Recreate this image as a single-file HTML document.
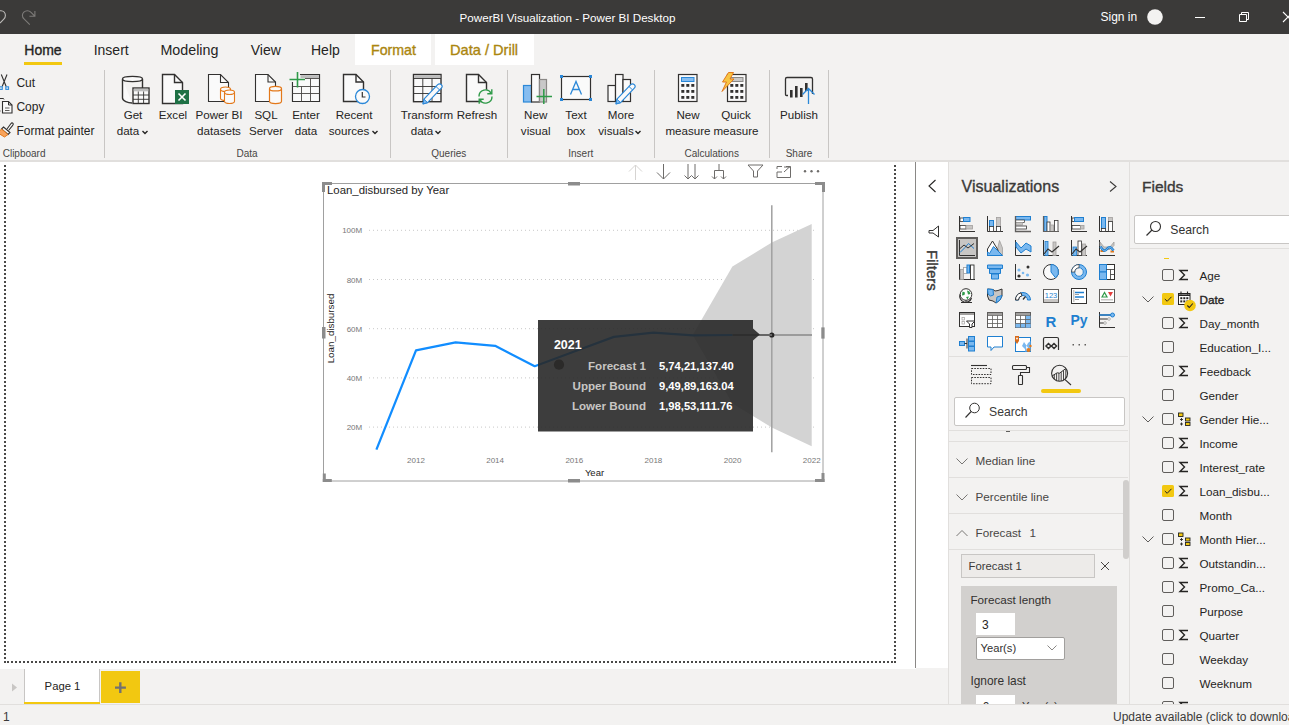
<!DOCTYPE html><html><head><meta charset="utf-8"><style>
html,body{margin:0;padding:0}
body{width:1289px;height:725px;position:relative;overflow:hidden;background:#f3f2f1;font-family:"Liberation Sans", sans-serif}
.t{position:absolute;white-space:nowrap;line-height:1}
.r{position:absolute}
.sb{-webkit-text-stroke:0.35px currentColor}
svg.r{overflow:visible}

</style></head><body>
<div class="r" style="left:0px;top:0px;width:1289px;height:34px;background:#3b3a39"></div>
<svg class="r" style="left:0px;top:0px;" width="40" height="34" viewBox="0 0 40 34"><path d="M-2 10.7 H1 A4.6 4.8 0 0 1 5.4 15.5 Q5.4 17.6 3.8 19.2 L0 23" fill="none" stroke="#bdbbb9" stroke-width="1.1"/><path d="M29.8 24.6 L24 18.9 Q22.4 17.4 22.4 15.5 A5 4.8 0 0 1 27.4 10.7 Q29.4 10.7 30.8 12.2 L34.3 15.7 M34.9 11 V16.3 H29.4" fill="none" stroke="#7d7b79" stroke-width="1.1"/></svg>
<div class="t" style="left:417.50px;width:300px;text-align:center;top:11.64px;font-size:11.65px;color:#ffffff;font-weight:normal;">PowerBI Visualization - Power BI Desktop</div>
<div class="t" style="left:1100.5px;top:11.34px;font-size:12px;color:#ffffff;font-weight:normal;">Sign in</div>
<svg class="r" style="left:1146px;top:9px;" width="18" height="18" viewBox="0 0 18 18"><circle cx="9" cy="8" r="7.8" fill="#f3f2f1"/></svg>
<div class="r" style="left:1195px;top:17px;width:10px;height:1px;background:#ffffff"></div>
<svg class="r" style="left:1237px;top:10px;" width="14" height="14" viewBox="0 0 14 14"><path d="M2.5 4.5 H9.5 V11.5 H2.5 Z M4.5 4.5 V2.5 H11.5 V9.5 H9.5" fill="none" stroke="#ffffff" stroke-width="1"/></svg>
<svg class="r" style="left:1283px;top:12px;" width="10" height="10" viewBox="0 0 10 10"><path d="M0 0 L10 10 M0 10 L10 0" fill="none" stroke="#ffffff" stroke-width="1.1"/></svg>
<div class="r" style="left:355px;top:34px;width:76px;height:31px;background:#ffffff"></div>
<div class="r" style="left:435px;top:34px;width:99px;height:31px;background:#ffffff"></div>
<div class="t sb" style="left:24.3px;top:43.15px;font-size:14px;color:#252423;font-weight:normal;">Home</div>
<div class="r" style="left:24px;top:62px;width:38px;height:3px;background:#f2c811"></div>
<div class="t" style="left:93.7px;top:43.15px;font-size:14px;color:#252423;font-weight:normal;">Insert</div>
<div class="t" style="left:160.4px;top:42.90px;font-size:14.3px;color:#252423;font-weight:normal;">Modeling</div>
<div class="t" style="left:250.7px;top:43.15px;font-size:14px;color:#252423;font-weight:normal;">View</div>
<div class="t" style="left:311px;top:43.15px;font-size:14px;color:#252423;font-weight:normal;">Help</div>
<div class="t sb" style="left:371px;top:42.98px;font-size:14.2px;color:#ab860f;font-weight:normal;">Format</div>
<div class="t sb" style="left:450px;top:42.64px;font-size:14.6px;color:#ab860f;font-weight:normal;">Data / Drill</div>
<div class="r" style="left:0px;top:160px;width:1289px;height:2px;background:#e1dfdd"></div>
<div class="r" style="left:104px;top:70px;width:1px;height:88px;background:#c8c6c4"></div>
<div class="r" style="left:390px;top:70px;width:1px;height:88px;background:#c8c6c4"></div>
<div class="r" style="left:507px;top:70px;width:1px;height:88px;background:#c8c6c4"></div>
<div class="r" style="left:654px;top:70px;width:1px;height:88px;background:#c8c6c4"></div>
<div class="r" style="left:769px;top:70px;width:1px;height:88px;background:#c8c6c4"></div>
<div class="r" style="left:828px;top:70px;width:1px;height:88px;background:#c8c6c4"></div>
<div class="t" style="left:2.7px;top:149.13px;font-size:10px;color:#484644;font-weight:normal;">Clipboard</div>
<div class="t" style="left:147.00px;width:200px;text-align:center;top:149.13px;font-size:10px;color:#484644;font-weight:normal;">Data</div>
<div class="t" style="left:348.80px;width:200px;text-align:center;top:149.13px;font-size:10px;color:#484644;font-weight:normal;">Queries</div>
<div class="t" style="left:480.80px;width:200px;text-align:center;top:149.13px;font-size:10px;color:#484644;font-weight:normal;">Insert</div>
<div class="t" style="left:611.70px;width:200px;text-align:center;top:149.13px;font-size:10px;color:#484644;font-weight:normal;">Calculations</div>
<div class="t" style="left:699.00px;width:200px;text-align:center;top:149.13px;font-size:10px;color:#484644;font-weight:normal;">Share</div>
<div class="t" style="left:16.4px;top:76.84px;font-size:12px;color:#252423;font-weight:normal;">Cut</div>
<div class="t" style="left:16.4px;top:100.64px;font-size:12px;color:#252423;font-weight:normal;">Copy</div>
<div class="t" style="left:16.4px;top:124.84px;font-size:12px;color:#252423;font-weight:normal;">Format painter</div>
<svg class="r" style="left:0px;top:70px;" width="20" height="70" viewBox="0 0 20 70"><path d="M1.3 4.5 L6.2 16.5 M7 4.5 L2.2 16.5" fill="none" stroke="#323130" stroke-width="1.1"/><rect x="-0.5" y="16.8" width="2.8" height="2.6" fill="#c7e0f4" stroke="#2b88d8" stroke-width="1"/><rect x="5.8" y="16.8" width="2.8" height="2.6" fill="#c7e0f4" stroke="#2b88d8" stroke-width="1"/><path d="M-1 28.5 H3.5 L4 29.5 M0.5 41 H-1" fill="none" stroke="#323130" stroke-width="1"/><path d="M2.5 31.5 H8.5 L12 35 V43 H2.5 Z" fill="#fafafa" stroke="#323130" stroke-width="1.1"/><path d="M8.5 31.5 V35 H12" fill="none" stroke="#323130" stroke-width="1"/><path d="M5 38 H9.5 M5 40.5 H9.5" stroke="#605e5c" stroke-width="1"/><path d="M7 59 L11 53.5 Q12 52.3 13 53.3 Q13.7 54.3 12.7 55.3 L8.5 60.5" fill="#fafafa" stroke="#323130" stroke-width="1.1"/><path d="M3.5 57 L10 62.5 L8 64.5 L1.5 59 Z" fill="#fafafa" stroke="#323130" stroke-width="1.1"/><path d="M1.5 59 L8 64.5 L4.5 67 L-2 63 Z" fill="#f7a35c" stroke="#e3791b" stroke-width="1"/></svg>
<div class="t" style="left:33.00px;width:200px;text-align:center;top:108.98px;font-size:11.6px;color:#252423;font-weight:normal;">Get</div>
<div class="t" style="left:28.00px;width:200px;text-align:center;top:125.48px;font-size:11.6px;color:#252423;font-weight:normal;">data</div>
<svg class="r" style="left:140.5px;top:129px;" width="8" height="6" viewBox="0 0 8 6"><path d="M1.5 2 L4 4.5 L6.5 2" fill="none" stroke="#252423" stroke-width="1.4"/></svg>
<div class="t" style="left:73.00px;width:200px;text-align:center;top:108.98px;font-size:11.6px;color:#252423;font-weight:normal;">Excel</div>
<div class="t" style="left:119.00px;width:200px;text-align:center;top:108.98px;font-size:11.6px;color:#252423;font-weight:normal;">Power BI</div>
<div class="t" style="left:119.00px;width:200px;text-align:center;top:125.48px;font-size:11.6px;color:#252423;font-weight:normal;">datasets</div>
<div class="t" style="left:166.00px;width:200px;text-align:center;top:108.98px;font-size:11.6px;color:#252423;font-weight:normal;">SQL</div>
<div class="t" style="left:166.00px;width:200px;text-align:center;top:125.48px;font-size:11.6px;color:#252423;font-weight:normal;">Server</div>
<div class="t" style="left:206.00px;width:200px;text-align:center;top:108.98px;font-size:11.6px;color:#252423;font-weight:normal;">Enter</div>
<div class="t" style="left:206.00px;width:200px;text-align:center;top:125.48px;font-size:11.6px;color:#252423;font-weight:normal;">data</div>
<div class="t" style="left:254.00px;width:200px;text-align:center;top:108.98px;font-size:11.6px;color:#252423;font-weight:normal;">Recent</div>
<div class="t" style="left:249.00px;width:200px;text-align:center;top:125.48px;font-size:11.6px;color:#252423;font-weight:normal;">sources</div>
<svg class="r" style="left:371px;top:129px;" width="8" height="6" viewBox="0 0 8 6"><path d="M1.5 2 L4 4.5 L6.5 2" fill="none" stroke="#252423" stroke-width="1.4"/></svg>
<div class="t" style="left:327.00px;width:200px;text-align:center;top:108.98px;font-size:11.6px;color:#252423;font-weight:normal;">Transform</div>
<div class="t" style="left:322.00px;width:200px;text-align:center;top:125.48px;font-size:11.6px;color:#252423;font-weight:normal;">data</div>
<svg class="r" style="left:434px;top:129px;" width="8" height="6" viewBox="0 0 8 6"><path d="M1.5 2 L4 4.5 L6.5 2" fill="none" stroke="#252423" stroke-width="1.4"/></svg>
<div class="t" style="left:377.00px;width:200px;text-align:center;top:108.98px;font-size:11.6px;color:#252423;font-weight:normal;">Refresh</div>
<div class="t" style="left:435.70px;width:200px;text-align:center;top:108.98px;font-size:11.6px;color:#252423;font-weight:normal;">New</div>
<div class="t" style="left:435.70px;width:200px;text-align:center;top:125.48px;font-size:11.6px;color:#252423;font-weight:normal;">visual</div>
<div class="t" style="left:476.00px;width:200px;text-align:center;top:108.98px;font-size:11.6px;color:#252423;font-weight:normal;">Text</div>
<div class="t" style="left:476.00px;width:200px;text-align:center;top:125.48px;font-size:11.6px;color:#252423;font-weight:normal;">box</div>
<div class="t" style="left:521.00px;width:200px;text-align:center;top:108.98px;font-size:11.6px;color:#252423;font-weight:normal;">More</div>
<div class="t" style="left:516.00px;width:200px;text-align:center;top:125.48px;font-size:11.6px;color:#252423;font-weight:normal;">visuals</div>
<svg class="r" style="left:634px;top:129px;" width="8" height="6" viewBox="0 0 8 6"><path d="M1.5 2 L4 4.5 L6.5 2" fill="none" stroke="#252423" stroke-width="1.4"/></svg>
<div class="t" style="left:588.00px;width:200px;text-align:center;top:108.98px;font-size:11.6px;color:#252423;font-weight:normal;">New</div>
<div class="t" style="left:588.00px;width:200px;text-align:center;top:125.48px;font-size:11.6px;color:#252423;font-weight:normal;">measure</div>
<div class="t" style="left:636.00px;width:200px;text-align:center;top:108.98px;font-size:11.6px;color:#252423;font-weight:normal;">Quick</div>
<div class="t" style="left:636.00px;width:200px;text-align:center;top:125.48px;font-size:11.6px;color:#252423;font-weight:normal;">measure</div>
<div class="t" style="left:699.00px;width:200px;text-align:center;top:108.98px;font-size:11.6px;color:#252423;font-weight:normal;">Publish</div>
<svg class="r" style="left:0;top:0" width="1289" height="162" viewBox="0 0 1289 162"><g stroke-width="1.4" fill="none">
<path d="M122.5 79 V98 C122.5 101 128 103 132 103 M122.5 79 C122.5 75.5 142.5 75.5 142.5 79 C142.5 82.5 122.5 82.5 122.5 79 M142.5 79 V88" stroke="#323130" fill="#fafafa"/>
<rect x="133" y="88" width="16" height="15.5" fill="#fafafa" stroke="#323130"/>
<rect x="133.7" y="88.7" width="14.6" height="2.6" fill="#bdbdbd" stroke="none"/>
<path d="M133 95 H149 M133 99.3 H149 M138.3 91.5 V103.5 M143.6 91.5 V103.5" stroke="#323130" stroke-width="0.9"/>
<path d="M162.5 74.5 H174.5 L182.5 82.5 V103.5 H162.5 Z" fill="#fafafa" stroke="#323130"/><path d="M174.5 74.5 V82.5 H182.5" stroke="#323130"/>
<rect x="175" y="90" width="14" height="14" fill="#1e7145" stroke="none"/>
<path d="M178.5 93.5 L185.5 100.5 M185.5 93.5 L178.5 100.5" stroke="#ffffff" stroke-width="1.6"/>
<path d="M208.5 74.5 H220.5 L228.5 82.5 V101.5 H208.5 Z" fill="#fafafa" stroke="#323130" stroke-width="1.1"/><path d="M220.5 74.5 V82.5 H228.5" stroke="#323130" stroke-width="1.1"/>
<path d="M220.5 89.2 C220.5 86.2 230.5 86.2 230.5 89.2 V98.3 C230.5 101.3 220.5 101.3 220.5 98.3 Z" fill="#fafafa" stroke="#e3791b" stroke-width="1.1"/><path d="M220.5 89.2 C220.5 92.2 230.5 92.2 230.5 89.2" fill="none" stroke="#e3791b" stroke-width="1.1"/>
<path d="M224.5 92.2 C224.5 89.2 234.5 89.2 234.5 92.2 V101.3 C234.5 104.3 224.5 104.3 224.5 101.3 Z" fill="#fafafa" stroke="#e3791b" stroke-width="1.1"/><path d="M224.5 92.2 C224.5 95.2 234.5 95.2 234.5 92.2" fill="none" stroke="#e3791b" stroke-width="1.1"/>
<path d="M255.5 74.5 H268 L275.5 82 V101.5 H255.5 Z" fill="#fafafa" stroke="#323130" stroke-width="1.1"/><path d="M268 74.5 V82 H275.5" stroke="#323130" stroke-width="1.1"/>
<path d="M269.5 88.7 C269.5 85.7 281.5 85.7 281.5 88.7 V101.3 C281.5 104.3 269.5 104.3 269.5 101.3 Z" fill="#fafafa" stroke="#e3791b" stroke-width="1.2"/><path d="M269.5 88.7 C269.5 91.7 281.5 91.7 281.5 88.7" fill="none" stroke="#e3791b" stroke-width="1.2"/>
<path d="M292.5 82 V101.5 H319.5 V74.5 H300" fill="#fafafa" stroke="#323130" stroke-width="1.1"/>
<rect x="292.5" y="82" width="27" height="19.5" fill="#fafafa" stroke="none"/><rect x="300" y="75" width="19" height="11" fill="#fafafa" stroke="none"/>
<path d="M292.5 82 V101.5 H319.5 V74.5 H300" fill="none" stroke="#323130" stroke-width="1.1"/>
<rect x="300.5" y="75.1" width="18.5" height="3" fill="#bdbdbd" stroke="none"/>
<path d="M305 78.5 H319.5 M292.5 86.5 H319.5 M292.5 93.5 H319.5 M301.5 86.5 V101.5 M310.5 78.5 V101.5" stroke="#484644" stroke-width="0.9"/>
<path d="M289.5 79.5 H305 M297.5 72 V87.5" stroke="#2e9a48" stroke-width="1.6"/>
<path d="M343.5 74.5 H356 L363.5 82 V101.5 H343.5 Z" fill="#fafafa" stroke="#323130"/><path d="M356 74.5 V82 H363.5" stroke="#323130"/>
<circle cx="362.5" cy="96.5" r="7" fill="#fafafa" stroke="#2b88d8" stroke-width="1.3"/><path d="M362.3 92 V97 H365.5" stroke="#323130" stroke-width="1.2"/>
<rect x="413.5" y="74.5" width="27.5" height="27.2" fill="#fafafa" stroke="#323130"/>
<rect x="414.2" y="75.2" width="26.1" height="3" fill="#bdbdbd" stroke="none"/>
<path d="M413.5 78.5 H441 M413.5 86.5 H441 M413.5 93.5 H441 M422.8 78.5 V101.7 M432 78.5 V101.7" stroke="#323130" stroke-width="0.9"/>
<g transform="translate(423 103.8)"><path d="M0 0 L0.95 -4.6 L14.7 -19.1 Q16.5 -20.9 18.3 -19.1 Q20.1 -17.3 18.3 -15.7 L4.55 -1.2 Z" fill="#fafafa" stroke="#2b88d8" stroke-width="1.2" stroke-linejoin="round"/><path d="M0 0 L0.95 -4.6 L4.55 -1.2 Z" fill="#86bdf0" stroke="#2b88d8" stroke-width="1"/><path d="M12.9 -17.4 L16.5 -13.9" stroke="#2b88d8" stroke-width="1"/></g>
<path d="M466.5 74.5 H478.5 L486.5 82.5 V101.5 H466.5 Z" fill="#fafafa" stroke="#323130"/><path d="M478.5 74.5 V82.5 H486.5" stroke="#323130"/>
<circle cx="485.5" cy="96.5" r="7" fill="#f3f2f1" stroke="none"/>
<path d="M479 96.5 A6.5 6.5 0 0 1 491.2 93.3 M492 96.5 A6.5 6.5 0 0 1 479.8 99.7" stroke="#2e9a48" stroke-width="1.4"/><path d="M491.8 89.3 V93.8 H487.3 M479.2 103.7 V99.2 H483.7" stroke="#2e9a48" stroke-width="1.4"/>
<rect x="523.5" y="85.5" width="8" height="16.5" fill="#86bdf0" stroke="#2b88d8" stroke-width="1.2"/>
<rect x="531.5" y="74.5" width="8" height="27.5" fill="#fafafa" stroke="#323130" stroke-width="1.2"/>
<rect x="539.5" y="79.5" width="7" height="22.5" fill="#c8c8c8" stroke="#8a8886" stroke-width="1.2"/>
<path d="M536.5 96.5 H552 M543.8 89 V104" stroke="#2e9a48" stroke-width="1.5"/>
<rect x="561.5" y="76.5" width="29" height="23" fill="#fafafa" stroke="#323130" stroke-width="1.2"/>
<rect x="560.0" y="75.0" width="3" height="3" fill="#2b88d8" stroke="none"/>
<rect x="589.0" y="75.0" width="3" height="3" fill="#2b88d8" stroke="none"/>
<rect x="560.0" y="98.0" width="3" height="3" fill="#2b88d8" stroke="none"/>
<rect x="589.0" y="98.0" width="3" height="3" fill="#2b88d8" stroke="none"/>
<path d="M570.5 94.5 L576 81.5 L581.5 94.5 M572.5 89.5 H579.5" stroke="#2b88d8" stroke-width="1.3"/>
<rect x="608" y="85.5" width="7.5" height="16" fill="#fafafa" stroke="#323130" stroke-width="1.2"/>
<rect x="615.5" y="74.5" width="7.5" height="27" fill="#fafafa" stroke="#323130" stroke-width="1.2"/>
<rect x="623" y="79.5" width="7.5" height="22" fill="#fafafa" stroke="#323130" stroke-width="1.2"/>
<g transform="translate(616 103.8)"><path d="M0 0 L0.95 -4.6 L14.7 -19.1 Q16.5 -20.9 18.3 -19.1 Q20.1 -17.3 18.3 -15.7 L4.55 -1.2 Z" fill="#fafafa" stroke="#2b88d8" stroke-width="1.2" stroke-linejoin="round"/><path d="M0 0 L0.95 -4.6 L4.55 -1.2 Z" fill="#86bdf0" stroke="#2b88d8" stroke-width="1"/><path d="M12.9 -17.4 L16.5 -13.9" stroke="#2b88d8" stroke-width="1"/></g>
<rect x="678.5" y="74.5" width="18.5" height="27" fill="#fafafa" stroke="#323130" stroke-width="1.2"/>
<rect x="681.5" y="77.5" width="12.5" height="4" fill="#86bdf0" stroke="#2b88d8" stroke-width="1"/>
<rect x="681.3" y="84.0" width="3" height="2.8" fill="#323130" stroke="none"/>
<rect x="681.3" y="90.0" width="3" height="2.8" fill="#323130" stroke="none"/>
<rect x="681.3" y="96.0" width="3" height="2.8" fill="#323130" stroke="none"/>
<rect x="686.3" y="84.0" width="3" height="2.8" fill="#323130" stroke="none"/>
<rect x="686.3" y="90.0" width="3" height="2.8" fill="#323130" stroke="none"/>
<rect x="686.3" y="96.0" width="3" height="2.8" fill="#323130" stroke="none"/>
<rect x="691.3" y="84.0" width="3" height="2.8" fill="#323130" stroke="none"/>
<rect x="691.3" y="90.0" width="3" height="2.8" fill="#323130" stroke="none"/>
<rect x="691.3" y="96.0" width="3" height="2.8" fill="#323130" stroke="none"/>
<rect x="727.5" y="74.5" width="18.5" height="27" fill="#fafafa" stroke="#323130" stroke-width="1.2"/>
<rect x="730.5" y="77.5" width="12.5" height="4" fill="#c8c8c8" stroke="#8a8886" stroke-width="1"/>
<rect x="730.3" y="84.0" width="3" height="2.8" fill="#323130" stroke="none"/>
<rect x="730.3" y="90.0" width="3" height="2.8" fill="#323130" stroke="none"/>
<rect x="730.3" y="96.0" width="3" height="2.8" fill="#323130" stroke="none"/>
<rect x="735.3" y="84.0" width="3" height="2.8" fill="#323130" stroke="none"/>
<rect x="735.3" y="90.0" width="3" height="2.8" fill="#323130" stroke="none"/>
<rect x="735.3" y="96.0" width="3" height="2.8" fill="#323130" stroke="none"/>
<rect x="740.3" y="84.0" width="3" height="2.8" fill="#323130" stroke="none"/>
<rect x="740.3" y="90.0" width="3" height="2.8" fill="#323130" stroke="none"/>
<rect x="740.3" y="96.0" width="3" height="2.8" fill="#323130" stroke="none"/>
<path d="M728.5 72.5 H733.5 L730 79 H734 L722 91.5 L726.5 82 H722.5 Z" fill="#f7c544" stroke="#e3791b" stroke-width="1"/>
<path d="M788 95.5 H786.5 Q785.5 95.5 785.5 94.5 V79 Q785.5 77.5 787 77.5 H811 Q812.5 77.5 812.5 79 V94" stroke="#323130" stroke-width="1.3"/>
<rect x="790" y="90" width="2.6" height="7.5" fill="#323130" stroke="none"/><rect x="795" y="86" width="2.6" height="11.5" fill="#323130" stroke="none"/><rect x="800" y="88" width="2.6" height="9" fill="#323130" stroke="none"/><rect x="805" y="83" width="2.6" height="8" fill="#323130" stroke="none"/>
<path d="M808.5 104 V88.5 M802.5 94.5 L808.5 88.5 L814.5 94.5" stroke="#2b88d8" stroke-width="1.3"/>
</g></svg>
<div class="r" style="left:0px;top:162px;width:916px;height:507px;background:#ffffff"></div>
<div class="r" style="left:4px;top:165px;width:2px;height:498px;background-image:linear-gradient(#4a4948 50%, transparent 50%);background-size:2px 4px"></div>
<div class="r" style="left:894px;top:165px;width:2px;height:498px;background-image:linear-gradient(#4a4948 50%, transparent 50%);background-size:2px 4px"></div>
<div class="r" style="left:7px;top:661px;width:887px;height:2px;background-image:linear-gradient(90deg,#4a4948 50%, transparent 50%);background-size:4px 2px"></div>
<div class="r" style="left:915px;top:162px;width:1px;height:506px;background:#8a8886"></div>
<svg class="r" style="left:0;top:0" width="916" height="668" viewBox="0 0 916 668">
<g fill="none" stroke-width="1">
<path d="M635.5 165 V180 M629 171.5 L635.5 165 L642 171.5" stroke="#d6d4d2"/>
<path d="M663.5 164 V179 M657 172.5 L663.5 179 L670 172.5" stroke="#6e6c6a"/>
<path d="M688 164 V179 M684.5 175.5 L688 179 L691.5 175.5 M695 164 V179 M691.5 175.5 L695 179 L698.5 175.5" stroke="#6e6c6a"/>
<path d="M719 164 V170.5 M714.5 179 V170.5 H723.5 V179 M712 176.5 L714.5 179 L717 176.5 M721 176.5 L723.5 179 L726 176.5" stroke="#6e6c6a"/>
<path d="M748 165 H763 L757.5 171 V177 H753.5 V171 Z" stroke="#6e6c6a"/>
<path d="M777 172 V177.5 H790.5 V167 H784 M777 166.5 H782 M777 166.5 V169 M782 172 H777 M784 172 L790 166.5 M786 166.5 H790.5 V170.5" stroke="#6e6c6a"/>
</g>
<circle cx="805" cy="171.2" r="1.2" fill="#6e6c6a"/>
<circle cx="811.5" cy="171.2" r="1.2" fill="#6e6c6a"/>
<circle cx="818" cy="171.2" r="1.2" fill="#6e6c6a"/>
<rect x="323.5" y="183.5" width="499.5" height="297.5" fill="#ffffff" stroke="#a0a0a0" stroke-width="1"/>
<line x1="369" y1="427.1" x2="816" y2="427.1" stroke="#c8c8c8" stroke-width="1" stroke-dasharray="1 3"/>
<text x="362.2" y="430.1" font-size="8" fill="#777777" text-anchor="end" font-family="Liberation Sans">20M</text>
<line x1="369" y1="377.9" x2="816" y2="377.9" stroke="#c8c8c8" stroke-width="1" stroke-dasharray="1 3"/>
<text x="362.2" y="380.9" font-size="8" fill="#777777" text-anchor="end" font-family="Liberation Sans">40M</text>
<line x1="369" y1="328.7" x2="816" y2="328.7" stroke="#c8c8c8" stroke-width="1" stroke-dasharray="1 3"/>
<text x="362.2" y="331.7" font-size="8" fill="#777777" text-anchor="end" font-family="Liberation Sans">60M</text>
<line x1="369" y1="279.5" x2="816" y2="279.5" stroke="#c8c8c8" stroke-width="1" stroke-dasharray="1 3"/>
<text x="362.2" y="282.5" font-size="8" fill="#777777" text-anchor="end" font-family="Liberation Sans">80M</text>
<line x1="369" y1="230.3" x2="816" y2="230.3" stroke="#c8c8c8" stroke-width="1" stroke-dasharray="1 3"/>
<text x="362.2" y="233.3" font-size="8" fill="#777777" text-anchor="end" font-family="Liberation Sans">100M</text>
<text x="416.0" y="463.4" font-size="8" fill="#777777" text-anchor="middle" font-family="Liberation Sans">2012</text>
<text x="495.1" y="463.4" font-size="8" fill="#777777" text-anchor="middle" font-family="Liberation Sans">2014</text>
<text x="574.3" y="463.4" font-size="8" fill="#777777" text-anchor="middle" font-family="Liberation Sans">2016</text>
<text x="653.4" y="463.4" font-size="8" fill="#777777" text-anchor="middle" font-family="Liberation Sans">2018</text>
<text x="732.6" y="463.4" font-size="8" fill="#777777" text-anchor="middle" font-family="Liberation Sans">2020</text>
<text x="811.7" y="463.4" font-size="8" fill="#777777" text-anchor="middle" font-family="Liberation Sans">2022</text>
<text x="594.5" y="475.5" font-size="9.5" fill="#252423" text-anchor="middle" font-family="Liberation Sans">Year</text>
<text transform="translate(334.3 328.5) rotate(-90)" font-size="9.8" fill="#252423" text-anchor="middle" font-family="Liberation Sans">Loan_disbursed</text>
<text x="327" y="193.9" font-size="11.4" fill="#252423" font-family="Liberation Sans">Loan_disbursed by Year</text>
<polygon points="692.7,335 732.4,266.6 771.8,242.6 811.7,224.1 811.7,446.2 771.8,427.5 732.4,403.4" fill="#d3d3d3"/>
<line x1="771.8" y1="205.2" x2="771.8" y2="452.2" stroke="#a0a0a0" stroke-width="1.5"/>
<line x1="755" y1="335" x2="812" y2="335" stroke="#888888" stroke-width="1.5"/>
<circle cx="771.8" cy="335" r="2.6" fill="#252423"/>
<polyline points="376.4,449.6 416.0,350.4 455.6,342.3 495.1,345.8 534.7,366.2 574.3,351.5 613.9,336.9 653.4,332.7 693.0,335.4 732.6,335.0" fill="none" stroke="#118dff" stroke-width="2.25" stroke-linejoin="round"/>
<polyline points="732.6,335 772.1,335" fill="none" stroke="#666666" stroke-width="2"/>
<path d="M538 320 H753 V328.6 L759.8 334.5 L753 340.4 V431.5 H538 Z" fill="rgba(40,40,40,0.9)"/>
<circle cx="559" cy="364.7" r="5.1" fill="#2b2a29"/>
<text x="553.9" y="349" font-size="12.5" font-weight="bold" fill="#ffffff" font-family="Liberation Sans">2021</text>
<text x="646" y="370.2" font-size="11.6" font-weight="bold" fill="#c8c6c4" text-anchor="end" font-family="Liberation Sans">Forecast 1</text>
<text x="659" y="370.2" font-size="11.2" font-weight="bold" fill="#ffffff" font-family="Liberation Sans">5,74,21,137.40</text>
<text x="646" y="390.3" font-size="11.6" font-weight="bold" fill="#c8c6c4" text-anchor="end" font-family="Liberation Sans">Upper Bound</text>
<text x="659" y="390.3" font-size="11.2" font-weight="bold" fill="#ffffff" font-family="Liberation Sans">9,49,89,163.04</text>
<text x="646" y="410.1" font-size="11.6" font-weight="bold" fill="#c8c6c4" text-anchor="end" font-family="Liberation Sans">Lower Bound</text>
<text x="659" y="410.1" font-size="11.2" font-weight="bold" fill="#ffffff" font-family="Liberation Sans">1,98,53,111.76</text>
<rect x="322" y="182" width="10" height="3" fill="#8c8c8c"/>
<rect x="322" y="182" width="3" height="10" fill="#8c8c8c"/>
<rect x="568" y="182" width="12" height="3.5" fill="#8c8c8c"/>
<rect x="815" y="182" width="10" height="3" fill="#8c8c8c"/>
<rect x="822" y="182" width="3" height="10" fill="#8c8c8c"/>
<rect x="322" y="327" width="3.5" height="11.5" fill="#8c8c8c"/>
<rect x="821.3" y="327.4" width="3.3" height="11.2" fill="#8c8c8c"/>
<rect x="322.8" y="479" width="9" height="3" fill="#8c8c8c"/>
<rect x="322.8" y="473.5" width="3" height="8.5" fill="#8c8c8c"/>
<rect x="568" y="479" width="12" height="3.5" fill="#8c8c8c"/>
<rect x="815" y="479" width="9.5" height="3" fill="#8c8c8c"/>
<rect x="821.5" y="473" width="3" height="9" fill="#8c8c8c"/>
</svg>
<div class="r" style="left:916px;top:162px;width:32px;height:506px;background:#ffffff"></div>
<svg class="r" style="left:926px;top:178px;" width="12" height="16" viewBox="0 0 12 16"><path d="M9.5 2 L3 8 L9.5 14" fill="none" stroke="#252423" stroke-width="1.1"/></svg>
<svg class="r" style="left:926px;top:224px;" width="16" height="16" viewBox="0 0 16 16"><path d="M12.5 2 V13 L7 9 H3 V6.5 H7 Z" fill="none" stroke="#323130" stroke-width="1" stroke-linejoin="round"/></svg>
<div class="t" style="left:924.5px;top:249.5px;width:13px;height:42px;"><div style="position:absolute;left:0;top:0;transform-origin:0 0;transform:translate(13.5px,0) rotate(90deg);font-size:15px;font-weight:normal;-webkit-text-stroke:0.4px #3b3a39;color:#3b3a39;line-height:13px;white-space:nowrap">Filters</div></div>
<div class="r" style="left:948px;top:162px;width:1px;height:543px;background:#e1dfdd"></div>
<div class="t sb" style="left:961.6px;top:179.06px;font-size:16px;color:#3b3a39;font-weight:normal;">Visualizations</div>
<svg class="r" style="left:1108px;top:180px;" width="10" height="13" viewBox="0 0 10 13"><path d="M2 1.5 L8 6.5 L2 11.5" fill="none" stroke="#3b3a39" stroke-width="1.1"/></svg>
<svg class="r" style="left:0;top:0" width="1289" height="725" viewBox="0 0 1289 725"><g transform="translate(959 216)"><path d="M0.5 0 V15.5 H16" fill="none" stroke="#323130" stroke-width="1"/><rect x="1" y="2" width="4" height="3.5" fill="#fff" stroke="#323130" stroke-width="0.8"/><rect x="4.5" y="1.5" width="6.5" height="4" fill="#7ab8ef" stroke="#1f7fd0" stroke-width="1"/><rect x="1" y="9.5" width="6" height="3.5" fill="#fff" stroke="#323130" stroke-width="0.8"/><rect x="7" y="9.5" width="6.5" height="3.5" fill="#c8c6c4" stroke="#a19f9d" stroke-width="0.8"/></g><g transform="translate(987 216)"><path d="M0.5 0 V15.5 H16" fill="none" stroke="#323130" stroke-width="1"/><rect x="2.5" y="4.5" width="4" height="6" fill="#7ab8ef" stroke="#1f7fd0" stroke-width="1"/><rect x="2.5" y="10.5" width="4" height="5" fill="#fff" stroke="#323130" stroke-width="0.8"/><rect x="9.5" y="1.5" width="4" height="9" fill="#c8c6c4" stroke="#a19f9d" stroke-width="0.8"/><rect x="9.5" y="10.5" width="4" height="5" fill="#fff" stroke="#323130" stroke-width="0.8"/></g><g transform="translate(1015 216)"><rect x="0.5" y="0.5" width="15" height="3.5" fill="#7ab8ef" stroke="#1f7fd0" stroke-width="1"/><rect x="0.5" y="4" width="9" height="2.5" fill="#fff" stroke="#323130" stroke-width="0.7"/><rect x="0.5" y="6.5" width="7" height="2.5" fill="#c8c6c4" stroke="#a19f9d" stroke-width="0.7"/><rect x="0.5" y="10" width="11" height="3" fill="#fff" stroke="#323130" stroke-width="0.8"/><path d="M0.5 0 V15.5 H16" fill="none" stroke="#605e5c" stroke-width="1.3"/></g><g transform="translate(1043 216)"><rect x="1" y="0.5" width="3" height="15" fill="#7ab8ef" stroke="#1f7fd0" stroke-width="1"/><rect x="4" y="6" width="3" height="9.5" fill="#fff" stroke="#323130" stroke-width="0.8"/><rect x="7.5" y="9" width="3" height="6.5" fill="#c8c6c4" stroke="#a19f9d" stroke-width="0.8"/><rect x="11.5" y="4.5" width="3.5" height="11" fill="#fff" stroke="#323130" stroke-width="0.8"/><path d="M0.5 0 V15.5 H16" fill="none" stroke="#605e5c" stroke-width="1.2"/></g><g transform="translate(1071 216)"><path d="M0.5 0 V15.5 H16" fill="none" stroke="#323130" stroke-width="1"/><rect x="1" y="2" width="2.5" height="3.5" fill="#fff" stroke="#323130" stroke-width="0.8"/><rect x="3.5" y="1.5" width="9" height="4" fill="#7ab8ef" stroke="#1f7fd0" stroke-width="1"/><rect x="1" y="9.5" width="8.5" height="3.5" fill="#fff" stroke="#323130" stroke-width="0.8"/><rect x="9.5" y="9.5" width="3.5" height="3.5" fill="#c8c6c4" stroke="#a19f9d" stroke-width="0.8"/></g><g transform="translate(1099 216)"><path d="M0.5 0 V15.5 H16" fill="none" stroke="#323130" stroke-width="1"/><rect x="2.5" y="1.5" width="4" height="11" fill="#7ab8ef" stroke="#1f7fd0" stroke-width="1"/><rect x="2.5" y="12.5" width="4" height="3" fill="#fff" stroke="#323130" stroke-width="0.8"/><rect x="9.5" y="1.5" width="4" height="4" fill="#c8c6c4" stroke="#a19f9d" stroke-width="0.8"/><rect x="9.5" y="5.5" width="4" height="10" fill="#fff" stroke="#323130" stroke-width="0.8"/></g><rect x="957" y="238" width="20" height="20" fill="#c8c6c4" stroke="#605e5c" stroke-width="2"/><g transform="translate(959 240)"><path d="M0.5 0 V15.5 H16" fill="none" stroke="#323130" stroke-width="1"/><path d="M1 12.5 L6 7.5 L9.5 3.5 L15 8.5" fill="none" stroke="#1f7fd0" stroke-width="1"/><path d="M1 8.5 L5 5 L9 8 L15 3.5" fill="none" stroke="#323130" stroke-width="1"/></g><g transform="translate(987 240)"><path d="M9 15.5 L12.5 0.5 L15.5 8 V15.5 Z" fill="#c8c6c4" stroke="#a19f9d" stroke-width="0.8"/><path d="M0.5 15.5 V9 L5.5 1 L11 10 V15.5 Z" fill="#fff" stroke="#323130" stroke-width="1"/><path d="M0.5 15.5 V12 L2.5 13.5 L6.5 6.5 L15.5 15.5 Z" fill="#7ab8ef" stroke="#1f7fd0" stroke-width="1"/></g><g transform="translate(1015 240)"><path d="M0.5 0 V15.5 H16" fill="none" stroke="#323130" stroke-width="1"/><path d="M1 2 L6 8 L11 3 L16 6 V12 L11 9 L6 13 L1 7 Z" fill="#7ab8ef" stroke="#1f7fd0" stroke-width="1"/></g><g transform="translate(1043 240)"><path d="M0.5 0 V15.5 H16" fill="none" stroke="#323130" stroke-width="1"/><rect x="2" y="1.5" width="3" height="14" fill="#7ab8ef" stroke="#1f7fd0" stroke-width="0.8"/><rect x="10" y="2" width="3" height="13.5" fill="#c8c6c4" stroke="#a19f9d" stroke-width="0.8"/><path d="M1 14 L5 9 L9 12 L16 6" fill="none" stroke="#323130" stroke-width="1.1"/></g><g transform="translate(1071 240)"><path d="M0.5 0 V15.5 H16" fill="none" stroke="#323130" stroke-width="1"/><rect x="2" y="7" width="3.5" height="8.5" fill="#7ab8ef" stroke="#1f7fd0" stroke-width="0.8"/><rect x="7" y="1" width="3.5" height="14.5" fill="#fff" stroke="#323130" stroke-width="0.8"/><rect x="11.5" y="4" width="3" height="11.5" fill="#c8c6c4" stroke="#a19f9d" stroke-width="0.8"/><path d="M1 14 L5 9 L9 12 L16 6" fill="none" stroke="#323130" stroke-width="1.1"/></g><g transform="translate(1099 240)"><path d="M0.5 0 V15.5 H16" fill="none" stroke="#323130" stroke-width="1"/><path d="M1 2 L5 7 H11 L15 2 V5.5 L11 9.5 H5 L1 5.5 Z" fill="#c8c6c4" stroke="#a19f9d" stroke-width="0.8"/><rect x="1.5" y="10" width="3.5" height="2" fill="#e3791b"/><rect x="11.5" y="10.5" width="3.5" height="2" fill="#e3791b"/><path d="M1.5 6.5 C4 11.5 6 11.5 8 9 C10 6.5 12 6.5 14.5 10.5" fill="none" stroke="#1f7fd0" stroke-width="2.6"/><path d="M1.5 6.5 C4 11.5 6 11.5 8 9 C10 6.5 12 6.5 14.5 10.5" fill="none" stroke="#7ab8ef" stroke-width="1"/></g><g transform="translate(959 264)"><path d="M0.5 0 V15.5 H16" fill="none" stroke="#323130" stroke-width="1"/><rect x="1.5" y="5.5" width="3" height="10" fill="#c8c6c4" stroke="#a19f9d" stroke-width="0.8"/><rect x="4.5" y="3.5" width="3.5" height="6" fill="#fff" stroke="#a19f9d" stroke-width="0.8"/><rect x="8" y="1" width="2.5" height="8" fill="#7ab8ef" stroke="#1f7fd0" stroke-width="1"/><rect x="11.5" y="1" width="3.5" height="14.5" fill="#fff" stroke="#323130" stroke-width="0.9"/></g><g transform="translate(987 264)"><path d="M0.5 1 H15.5 V4.5 H0.5 Z M2.5 5 H13.5 V9.5 H2.5 Z M4.5 10 H11.5 V15 H4.5 Z" fill="#7ab8ef" stroke="#1f7fd0" stroke-width="1"/></g><g transform="translate(1015 264)"><path d="M0.5 0 V15.5 H16" fill="none" stroke="#323130" stroke-width="1"/><circle cx="4" cy="6" r="1.6" fill="#7ab8ef"/><circle cx="8" cy="9" r="1.3" fill="#7ab8ef"/><circle cx="13" cy="3" r="1.5" fill="#323130"/><circle cx="4" cy="12" r="1.6" fill="#323130"/><circle cx="12.5" cy="11" r="1.6" fill="#7ab8ef"/></g><g transform="translate(1043 264)"><circle cx="8" cy="8" r="7.5" fill="#fafafa" stroke="#323130" stroke-width="1"/><path d="M8 0.5 A7.5 7.5 0 0 1 12.6 13.9 L8 8 Z" fill="#7ab8ef" stroke="#1f7fd0" stroke-width="1"/></g><g transform="translate(1071 264)"><circle cx="8" cy="8" r="6" fill="none" stroke="#7ab8ef" stroke-width="3"/><circle cx="8" cy="8" r="7.5" fill="none" stroke="#1f7fd0" stroke-width="1"/><circle cx="8" cy="8" r="4.3" fill="#f3f2f1" stroke="#1f7fd0" stroke-width="1"/><path d="M0.5 8 A7.5 7.5 0 0 1 8 0.5 V3.7 A4.3 4.3 0 0 0 3.7 8 Z" fill="#fff" stroke="#323130" stroke-width="0.7"/></g><g transform="translate(1099 264)"><rect x="0.5" y="0.5" width="15" height="15" fill="#fff" stroke="#323130" stroke-width="1"/><rect x="0.5" y="0.5" width="7" height="7.5" fill="#7ab8ef" stroke="#1f7fd0" stroke-width="1"/><rect x="0.5" y="8" width="7" height="7.5" fill="#7ab8ef" stroke="#1f7fd0" stroke-width="1"/><path d="M7.5 5.5 H15.5 M11.5 5.5 V15.5 M11.5 10.5 H15.5" stroke="#323130" stroke-width="0.8"/></g><g transform="translate(959 288)"><circle cx="7" cy="6.5" r="5.8" fill="#fff" stroke="#323130" stroke-width="1"/><path d="M3.5 3.5 L6 4.5 L5.5 7 L3 7.5 Z M8 2.5 L10.5 3.5 L11.5 6 L9 6.5 Z M7 9 L10 8.5 L8.5 11.5 Z" fill="#2e9a48"/><path d="M2 14.5 H13 M7 12.5 V14.5" stroke="#323130" stroke-width="1"/><path d="M1 6.5 A6 6 0 0 0 12.5 10" fill="none" stroke="#323130" stroke-width="1.2"/></g><g transform="translate(987 288)"><path d="M0.5 1 L6 1.5 L8 3 L11 2.5 L15 1 V8 L13 12 L9 15 L6 13 L2 12 L0.5 8 Z" fill="#c8c6c4" stroke="#323130" stroke-width="1"/><path d="M0.5 1 L6 1.5 L6.5 7 L3.5 8 L1 6 Z M10 9 L15 7.5 L13 12 L9 15 Z" fill="#7ab8ef" stroke="#1f7fd0" stroke-width="1"/></g><g transform="translate(1015 288)"><path d="M0.5 12 A7.5 7.5 0 0 1 15.5 12 H12.5 A4.5 4.5 0 0 0 3.5 12 Z" fill="#7ab8ef" stroke="#1f7fd0" stroke-width="1"/><path d="M0.5 12 A7.5 7.5 0 0 1 6 4.8 L7 7.7 A4.5 4.5 0 0 0 3.5 12 Z" fill="#fff" stroke="#323130" stroke-width="1"/><path d="M8 11.5 L10.5 8.5" stroke="#323130" stroke-width="1.3"/></g><g transform="translate(1043 288)"><rect x="0.5" y="1.5" width="15" height="13" fill="#fff" stroke="#605e5c" stroke-width="1"/><rect x="1" y="11" width="14" height="3" fill="#c8c6c4"/><text x="8" y="10" font-size="7.5" fill="#1f7fd0" text-anchor="middle" font-family="Liberation Sans">123</text></g><g transform="translate(1071 288)"><rect x="0.5" y="0.5" width="15" height="15" fill="#fff" stroke="#323130" stroke-width="1"/><rect x="2" y="2" width="1.5" height="12" fill="#c8c6c4"/><path d="M4 4.5 H13 M4 9 H13" stroke="#1f7fd0" stroke-width="1.5"/><path d="M4 6.5 H8 M4 11.5 H8" stroke="#a19f9d" stroke-width="1"/></g><g transform="translate(1099 288)"><rect x="0.5" y="1.5" width="15" height="13" fill="#fff" stroke="#605e5c" stroke-width="1"/><path d="M3 9 L5.5 4.5 L8 9 Z" fill="none" stroke="#2e9a48" stroke-width="1.2"/><path d="M9 4 H14 L11.5 8.5 Z" fill="#e43d3d"/><rect x="2" y="11" width="12" height="1.5" fill="#c8c6c4"/></g><g transform="translate(959 312)"><rect x="0.5" y="0.5" width="15" height="14" fill="#fff" stroke="#323130" stroke-width="1"/><rect x="1" y="1" width="14" height="2" fill="#a19f9d"/><rect x="3" y="5.5" width="2.5" height="2.5" fill="#fff" stroke="#a19f9d" stroke-width="0.7"/><rect x="3" y="9.5" width="2.5" height="2.5" fill="#fff" stroke="#a19f9d" stroke-width="0.7"/><path d="M7.5 9 H16 L13 12 V15.5 H10.5 V12 Z" fill="#fff" stroke="#323130" stroke-width="1"/></g><g transform="translate(987 312)"><rect x="0.5" y="0.5" width="15" height="15" fill="#fff" stroke="#605e5c" stroke-width="1"/><rect x="1" y="1" width="14" height="2" fill="#a19f9d"/><path d="M0.5 3.5 H15.5 M0.5 7.5 H15.5 M0.5 11.5 H15.5 M5.5 3.5 V15.5 M10.5 3.5 V15.5" stroke="#605e5c" stroke-width="0.8"/></g><g transform="translate(1015 312)"><rect x="0.5" y="0.5" width="15" height="15" fill="#fff" stroke="#605e5c" stroke-width="1"/><rect x="1" y="1" width="14" height="2" fill="#a19f9d"/><rect x="10.5" y="3.5" width="5" height="12" fill="#7ab8ef"/><rect x="0.5" y="11.5" width="15" height="4" fill="#7ab8ef"/><path d="M0.5 3.5 H15.5 M0.5 7.5 H15.5 M0.5 11.5 H15.5 M5.5 3.5 V15.5 M10.5 3.5 V15.5" stroke="#605e5c" stroke-width="0.8"/></g><g transform="translate(1043 312)"><text x="8" y="14.5" font-size="15" font-weight="bold" fill="#1f7fd0" text-anchor="middle" font-family="Liberation Sans">R</text></g><g transform="translate(1071 312)"><text x="8" y="13" font-size="14" font-weight="bold" fill="#1f7fd0" text-anchor="middle" font-family="Liberation Sans">Py</text></g><g transform="translate(1099 312)"><path d="M0.5 0 V15.5 H16 M0.5 3 H13 M0.5 7 H9.5 M0.5 11 H5.5" fill="none" stroke="#323130" stroke-width="1"/><path d="M0.5 3 H13" stroke="#1f7fd0" stroke-width="1.5"/><circle cx="13.5" cy="3" r="2" fill="#7ab8ef" stroke="#1f7fd0" stroke-width="1"/><circle cx="10" cy="7" r="1.3" fill="#fff" stroke="#a19f9d" stroke-width="0.8"/><circle cx="6" cy="11" r="1.3" fill="#fff" stroke="#a19f9d" stroke-width="0.8"/></g><g transform="translate(959 336)"><rect x="0.5" y="5.5" width="5" height="4" fill="#7ab8ef" stroke="#1f7fd0" stroke-width="1"/><path d="M5.5 7.5 H8 M8 2.5 V12.5" stroke="#323130" stroke-width="1"/><rect x="9.5" y="0.5" width="6" height="4.5" fill="#7ab8ef" stroke="#1f7fd0" stroke-width="1"/><rect x="9.5" y="5.5" width="6" height="4.5" fill="#7ab8ef" stroke="#1f7fd0" stroke-width="1"/><rect x="9.5" y="10.5" width="6" height="4.5" fill="#7ab8ef" stroke="#1f7fd0" stroke-width="1"/></g><g transform="translate(987 336)"><path d="M0.5 0.5 H15.5 V11 H7 L4 14.5 V11 H0.5 Z" fill="#fff" stroke="#1f7fd0" stroke-width="1"/></g><g transform="translate(1015 336)"><rect x="0.5" y="1.5" width="15" height="14" fill="#fff" stroke="#1f7fd0" stroke-width="1"/><path d="M6 1.5 L9 6 L7 10 L10 13 V15.5 H12 L11 11 L13 7 L15.5 5 V15.5" fill="#7ab8ef" stroke="none"/><path d="M0 0 H4 V5 L2 8 L0 5 Z" fill="#d66b1b"/><circle cx="2" cy="2.5" r="0.9" fill="#fff"/><circle cx="13.5" cy="14" r="2" fill="#e3791b"/><circle cx="15.5" cy="10" r="1.2" fill="#e3791b"/></g><g transform="translate(1043 336)"><path d="M0.5 14 V3 Q0.5 1.5 2 1.5 H14 Q15.5 1.5 15.5 3 V14" fill="none" stroke="#323130" stroke-width="1.2"/><path d="M3 10 L5.5 7.5 L8 10 L5.5 12.5 Z M8.5 10 L11 7.5 L13.5 10 L11 12.5 Z" fill="none" stroke="#323130" stroke-width="1.5"/></g><g transform="translate(1071 336)"><rect x="1.5" y="8" width="1.5" height="1.5" fill="#605e5c"/></g><g transform="translate(1071 336)"><rect x="7.5" y="8" width="1.5" height="1.5" fill="#605e5c"/></g><g transform="translate(1071 336)"><rect x="13.5" y="8" width="1.5" height="1.5" fill="#605e5c"/></g></svg>
<div class="r" style="left:949px;top:356px;width:179px;height:1px;background:#e1dfdd"></div>
<svg class="r" style="left:966px;top:360px;" width="30" height="30" viewBox="0 0 30 30"><path d="M5 5.5 H21" stroke="#323130" stroke-width="1.1"/><g fill="none" stroke="#323130" stroke-width="1" stroke-dasharray="1.6 1.2"><rect x="5.5" y="8.5" width="19.5" height="6"/><rect x="5.5" y="17.5" width="19.5" height="6.2"/></g></svg>
<svg class="r" style="left:1008px;top:360px;" width="26" height="30" viewBox="0 0 26 30"><g fill="none" stroke="#323130" stroke-width="1.1"><rect x="4.5" y="5.5" width="14" height="4" rx="1"/><path d="M18.5 7.5 H21.5 V12.5 H12.5 V15.5"/><rect x="10.5" y="15.5" width="4" height="9" rx="0.5"/></g></svg>
<svg class="r" style="left:1048px;top:361px;" width="26" height="26" viewBox="0 0 26 26"><g fill="none" stroke="#323130" stroke-width="1.1"><circle cx="11.6" cy="12.2" r="8"/><path d="M16.8 18.3 L23 24"/><path d="M4 15 L9.2 11.8 L11.5 12.2 L17.5 7.8" stroke-width="1"/><path d="M6.3 13.8 V18 M8.6 12.3 V19.5 M10.9 12.1 V20.1 M13.2 11.2 V20 M15.5 9.5 V19.2 M17.8 7.9 V17.5" stroke-width="0.9"/></g></svg>
<div class="r" style="left:1041px;top:389px;width:40px;height:4px;background:#f2c811;border-radius:2px"></div>
<div class="r" style="left:953.5px;top:396.5px;width:171px;height:29px;background:#ffffff;border:1px solid #c8c6c4;border-radius:2px;box-sizing:border-box"></div>
<svg class="r" style="left:964px;top:402px;" width="16" height="16" viewBox="0 0 16 16"><circle cx="10.5" cy="6" r="4.8" fill="none" stroke="#323130" stroke-width="1"/><path d="M7.2 9.5 L1.5 15.5" stroke="#323130" stroke-width="1.1"/></svg>
<div class="t" style="left:989px;top:405.67px;font-size:12.2px;color:#3b3a39;font-weight:normal;">Search</div>
<div class="r" style="left:949px;top:430px;width:179px;height:1px;background:#e1dfdd"></div>
<div class="r" style="left:1006px;top:431px;width:4px;height:1px;background:#605e5c"></div>
<div class="r" style="left:949px;top:441px;width:179px;height:1px;background:#e1dfdd"></div>
<div class="t" style="left:975.5px;top:455.10px;font-size:11.7px;color:#484644;font-weight:normal;">Median line</div>
<div class="t" style="left:975.5px;top:491.10px;font-size:11.7px;color:#484644;font-weight:normal;">Percentile line</div>
<div class="r" style="left:949px;top:477px;width:179px;height:1px;background:#e1dfdd"></div>
<div class="r" style="left:949px;top:513px;width:179px;height:1px;background:#e1dfdd"></div>
<div class="r" style="left:949px;top:549px;width:179px;height:1px;background:#e1dfdd"></div>
<svg class="r" style="left:955px;top:455.5px;" width="14" height="10" viewBox="0 0 14 10"><path d="M1.5 2.5 L7 8 L12.5 2.5" fill="none" stroke="#797775" stroke-width="1"/></svg>
<svg class="r" style="left:955px;top:491.5px;" width="14" height="10" viewBox="0 0 14 10"><path d="M1.5 2.5 L7 8 L12.5 2.5" fill="none" stroke="#797775" stroke-width="1"/></svg>
<svg class="r" style="left:955px;top:527.5px;" width="14" height="10" viewBox="0 0 14 10"><path d="M1.5 8 L7 2.5 L12.5 8" fill="none" stroke="#797775" stroke-width="1"/></svg>
<div class="t" style="left:975.5px;top:527.10px;font-size:11.7px;color:#484644;font-weight:normal;">Forecast</div>
<div class="t" style="left:1029.5px;top:527.10px;font-size:11.7px;color:#484644;font-weight:normal;">1</div>
<div class="r" style="left:1123px;top:480px;width:5.6px;height:78.6px;background:#d0cecc;border-radius:3px"></div>
<div class="r" style="left:961px;top:554px;width:134px;height:24px;background:#edebe9;border:1px solid #c8c6c4;box-sizing:border-box"></div>
<div class="t" style="left:968.5px;top:561.43px;font-size:11.3px;color:#3b3a39;font-weight:normal;">Forecast 1</div>
<svg class="r" style="left:1099px;top:560px;" width="12" height="12" viewBox="0 0 12 12"><path d="M2 2 L10 10 M10 2 L2 10" stroke="#484644" stroke-width="1"/></svg>
<div class="r" style="left:961px;top:586px;width:156px;height:119px;background:#d2d0ce"></div>
<div class="t" style="left:970.4px;top:594.10px;font-size:11.7px;color:#323130;font-weight:normal;">Forecast length</div>
<div class="r" style="left:975.5px;top:613px;width:39px;height:22px;background:#ffffff"></div>
<div class="t" style="left:982px;top:618.84px;font-size:12px;color:#252423;font-weight:normal;">3</div>
<div class="r" style="left:975.5px;top:636.5px;width:89.5px;height:23.5px;background:#ffffff;border:1px solid #a19f9d;border-radius:2px;box-sizing:border-box"></div>
<div class="t" style="left:980.5px;top:643.02px;font-size:11.2px;color:#323130;font-weight:normal;">Year(s)</div>
<svg class="r" style="left:1046px;top:644px;" width="12" height="8" viewBox="0 0 12 8"><path d="M1.5 1.5 L6 6 L10.5 1.5" fill="none" stroke="#8a8886" stroke-width="1"/></svg>
<div class="t" style="left:970.4px;top:675.93px;font-size:11.9px;color:#323130;font-weight:normal;">Ignore last</div>
<div class="r" style="left:975.5px;top:695px;width:39px;height:10px;background:#ffffff"></div>
<div class="t" style="left:1022px;top:700.52px;font-size:11.2px;color:#323130;font-weight:normal;">Year(s)</div>
<div class="t" style="left:982.7px;top:701.34px;font-size:12px;color:#323130;font-weight:normal;">0</div>
<div class="r" style="left:1129px;top:162px;width:160px;height:543px;background:#f3f2f1"></div>
<div class="r" style="left:1129px;top:162px;width:1px;height:543px;background:#e1dfdd"></div>
<div class="t sb" style="left:1142px;top:179.28px;font-size:15.5px;color:#3b3a39;font-weight:normal;">Fields</div>
<div class="r" style="left:1134px;top:215px;width:160px;height:28.5px;background:#ffffff;border:1px solid #c8c6c4;border-radius:2px;box-sizing:border-box"></div>
<svg class="r" style="left:1145px;top:220px;" width="17" height="17" viewBox="0 0 17 17"><circle cx="10.5" cy="6.5" r="5" fill="none" stroke="#323130" stroke-width="1.1"/><path d="M7 10 L1.5 15.5" stroke="#323130" stroke-width="1.2"/></svg>
<div class="t" style="left:1170.3px;top:223.67px;font-size:12.2px;color:#323130;font-weight:normal;">Search</div>
<div class="r" style="left:1130px;top:248px;width:159px;height:1px;background:#e1dfdd"></div>
<div class="r" style="left:1163.5px;top:257.5px;width:5px;height:1.5px;background:#f2c811"></div>
<div class="t" style="left:1199.5px;top:270.10px;font-size:11.7px;color:#252423;font-weight:normal;">Age</div>
<div class="t sb" style="left:1199.5px;top:294.10px;font-size:11.7px;color:#252423;font-weight:normal;">Date</div>
<div class="t" style="left:1199.5px;top:318.10px;font-size:11.7px;color:#252423;font-weight:normal;">Day_month</div>
<div class="t" style="left:1199.5px;top:342.10px;font-size:11.7px;color:#252423;font-weight:normal;">Education_I...</div>
<div class="t" style="left:1199.5px;top:366.10px;font-size:11.7px;color:#252423;font-weight:normal;">Feedback</div>
<div class="t" style="left:1199.5px;top:390.10px;font-size:11.7px;color:#252423;font-weight:normal;">Gender</div>
<div class="t" style="left:1199.5px;top:414.10px;font-size:11.7px;color:#252423;font-weight:normal;">Gender Hie...</div>
<div class="t" style="left:1199.5px;top:438.10px;font-size:11.7px;color:#252423;font-weight:normal;">Income</div>
<div class="t" style="left:1199.5px;top:462.10px;font-size:11.7px;color:#252423;font-weight:normal;">Interest_rate</div>
<div class="t" style="left:1199.5px;top:486.10px;font-size:11.7px;color:#252423;font-weight:normal;">Loan_disbu...</div>
<div class="t" style="left:1199.5px;top:510.10px;font-size:11.7px;color:#252423;font-weight:normal;">Month</div>
<div class="t" style="left:1199.5px;top:534.10px;font-size:11.7px;color:#252423;font-weight:normal;">Month Hier...</div>
<div class="t" style="left:1199.5px;top:558.10px;font-size:11.7px;color:#252423;font-weight:normal;">Outstandin...</div>
<div class="t" style="left:1199.5px;top:582.10px;font-size:11.7px;color:#252423;font-weight:normal;">Promo_Ca...</div>
<div class="t" style="left:1199.5px;top:606.10px;font-size:11.7px;color:#252423;font-weight:normal;">Purpose</div>
<div class="t" style="left:1199.5px;top:630.10px;font-size:11.7px;color:#252423;font-weight:normal;">Quarter</div>
<div class="t" style="left:1199.5px;top:654.10px;font-size:11.7px;color:#252423;font-weight:normal;">Weekday</div>
<div class="t" style="left:1199.5px;top:678.10px;font-size:11.7px;color:#252423;font-weight:normal;">Weeknum</div>
<div class="t" style="left:1199.5px;top:702.10px;font-size:11.7px;color:#252423;font-weight:normal;">Year</div>
<svg class="r" style="left:0;top:0" width="1289" height="725" viewBox="0 0 1289 725"><rect x="1162.5" y="269.5" width="11" height="11" rx="1.5" fill="none" stroke="#605e5c" stroke-width="1"/><path d="M1188 270.5 H1180 L1184.5 275.0 L1180 279.5 H1188" fill="none" stroke="#252423" stroke-width="1.4"/><path d="M1142.5 296.5 L1148 302.0 L1153.5 296.5" fill="none" stroke="#605e5c" stroke-width="1"/><rect x="1162" y="293.0" width="12" height="12" rx="1.5" fill="#f2c811"/><path d="M1164.8 299.0 L1167.2 301.3 L1171.5 296.8" fill="none" stroke="#252423" stroke-width="1"/><rect x="1178.5" y="293.5" width="11.5" height="11" fill="#fff" stroke="#252423" stroke-width="1"/><path d="M1178.5 295.2 H1190" stroke="#252423" stroke-width="1.6"/><path d="M1181 291.5 V294.5 M1187.5 291.5 V294.5" stroke="#252423" stroke-width="1.1"/><rect x="1180.3" y="297.2" width="2" height="2" fill="#252423"/><rect x="1180.3" y="300.4" width="2" height="2" fill="#252423"/><rect x="1183.3" y="297.2" width="2" height="2" fill="#252423"/><rect x="1183.3" y="300.4" width="2" height="2" fill="#252423"/><rect x="1186.3" y="297.2" width="2" height="2" fill="#252423"/><rect x="1186.3" y="300.4" width="2" height="2" fill="#252423"/><circle cx="1190" cy="305.5" r="5.8" fill="#f2c811"/><path d="M1187.3 305.5 L1189.3 307.5 L1192.8 303.5" fill="none" stroke="#252423" stroke-width="1.1"/><rect x="1162.5" y="317.5" width="11" height="11" rx="1.5" fill="none" stroke="#605e5c" stroke-width="1"/><path d="M1188 318.5 H1180 L1184.5 323.0 L1180 327.5 H1188" fill="none" stroke="#252423" stroke-width="1.4"/><rect x="1162.5" y="341.5" width="11" height="11" rx="1.5" fill="none" stroke="#605e5c" stroke-width="1"/><rect x="1162.5" y="365.5" width="11" height="11" rx="1.5" fill="none" stroke="#605e5c" stroke-width="1"/><path d="M1188 366.5 H1180 L1184.5 371.0 L1180 375.5 H1188" fill="none" stroke="#252423" stroke-width="1.4"/><rect x="1162.5" y="389.5" width="11" height="11" rx="1.5" fill="none" stroke="#605e5c" stroke-width="1"/><path d="M1142.5 416.5 L1148 422.0 L1153.5 416.5" fill="none" stroke="#605e5c" stroke-width="1"/><rect x="1162.5" y="413.5" width="11" height="11" rx="1.5" fill="none" stroke="#605e5c" stroke-width="1"/><rect x="1178.5" y="413.0" width="4.5" height="3.5" fill="#f2c811" stroke="#252423" stroke-width="0.9"/><rect x="1185.5" y="418.0" width="4.5" height="3" fill="#f2c811" stroke="#252423" stroke-width="0.9"/><rect x="1185.5" y="422.5" width="4.5" height="3" fill="#f2c811" stroke="#252423" stroke-width="0.9"/><path d="M1180 419.5 H1183 M1181.5 418.0 V421.0 M1180 424.0 H1183 M1181.5 422.5 V425.5" fill="none" stroke="#252423" stroke-width="0.9"/><rect x="1162.5" y="437.5" width="11" height="11" rx="1.5" fill="none" stroke="#605e5c" stroke-width="1"/><path d="M1188 438.5 H1180 L1184.5 443.0 L1180 447.5 H1188" fill="none" stroke="#252423" stroke-width="1.4"/><rect x="1162.5" y="461.5" width="11" height="11" rx="1.5" fill="none" stroke="#605e5c" stroke-width="1"/><path d="M1188 462.5 H1180 L1184.5 467.0 L1180 471.5 H1188" fill="none" stroke="#252423" stroke-width="1.4"/><rect x="1162" y="485.0" width="12" height="12" rx="1.5" fill="#f2c811"/><path d="M1164.8 491.0 L1167.2 493.3 L1171.5 488.8" fill="none" stroke="#252423" stroke-width="1"/><path d="M1188 486.5 H1180 L1184.5 491.0 L1180 495.5 H1188" fill="none" stroke="#252423" stroke-width="1.4"/><rect x="1162.5" y="509.5" width="11" height="11" rx="1.5" fill="none" stroke="#605e5c" stroke-width="1"/><path d="M1142.5 536.5 L1148 542.0 L1153.5 536.5" fill="none" stroke="#605e5c" stroke-width="1"/><rect x="1162.5" y="533.5" width="11" height="11" rx="1.5" fill="none" stroke="#605e5c" stroke-width="1"/><rect x="1178.5" y="533.0" width="4.5" height="3.5" fill="#f2c811" stroke="#252423" stroke-width="0.9"/><rect x="1185.5" y="538.0" width="4.5" height="3" fill="#f2c811" stroke="#252423" stroke-width="0.9"/><rect x="1185.5" y="542.5" width="4.5" height="3" fill="#f2c811" stroke="#252423" stroke-width="0.9"/><path d="M1180 539.5 H1183 M1181.5 538.0 V541.0 M1180 544.0 H1183 M1181.5 542.5 V545.5" fill="none" stroke="#252423" stroke-width="0.9"/><rect x="1162.5" y="557.5" width="11" height="11" rx="1.5" fill="none" stroke="#605e5c" stroke-width="1"/><path d="M1188 558.5 H1180 L1184.5 563.0 L1180 567.5 H1188" fill="none" stroke="#252423" stroke-width="1.4"/><rect x="1162.5" y="581.5" width="11" height="11" rx="1.5" fill="none" stroke="#605e5c" stroke-width="1"/><path d="M1188 582.5 H1180 L1184.5 587.0 L1180 591.5 H1188" fill="none" stroke="#252423" stroke-width="1.4"/><rect x="1162.5" y="605.5" width="11" height="11" rx="1.5" fill="none" stroke="#605e5c" stroke-width="1"/><rect x="1162.5" y="629.5" width="11" height="11" rx="1.5" fill="none" stroke="#605e5c" stroke-width="1"/><path d="M1188 630.5 H1180 L1184.5 635.0 L1180 639.5 H1188" fill="none" stroke="#252423" stroke-width="1.4"/><rect x="1162.5" y="653.5" width="11" height="11" rx="1.5" fill="none" stroke="#605e5c" stroke-width="1"/><rect x="1162.5" y="677.5" width="11" height="11" rx="1.5" fill="none" stroke="#605e5c" stroke-width="1"/><rect x="1162.5" y="701.5" width="11" height="11" rx="1.5" fill="none" stroke="#605e5c" stroke-width="1"/><path d="M1188 702.5 H1180 L1184.5 707.0 L1180 711.5 H1188" fill="none" stroke="#252423" stroke-width="1.4"/></svg>
<div class="r" style="left:0px;top:669px;width:948px;height:36px;background:#f3f2f1"></div>
<div class="r" style="left:24px;top:669px;width:76px;height:35px;background:#ffffff;border-left:1px solid #c8c6c4;border-right:1px solid #c8c6c4;box-sizing:border-box"></div>
<div class="r" style="left:24px;top:702px;width:76px;height:2px;background:#f2c811"></div>
<div class="t" style="left:-37.50px;width:200px;text-align:center;top:681.43px;font-size:11.3px;color:#252423;font-weight:normal;">Page 1</div>
<div class="r" style="left:101px;top:671px;width:39px;height:32px;background:#f2c811"></div>
<svg class="r" style="left:113px;top:680px;" width="14" height="14" viewBox="0 0 14 14"><path d="M7.3 2.3 V12.9 M2 7.6 H12.9" stroke="#737170" stroke-width="2.4"/></svg>
<svg class="r" style="left:11px;top:683px;" width="8" height="10" viewBox="0 0 8 10"><path d="M1 0.5 L6 4.5 L1 8.5 Z" fill="#c8c6c4"/></svg>
<div class="r" style="left:0px;top:704px;width:1289px;height:1px;background:#e1dfdd"></div>
<div class="r" style="left:0px;top:705px;width:1289px;height:20px;background:#f3f2f1"></div>
<div class="t" style="left:3px;top:710.84px;font-size:12px;color:#3b3a39;font-weight:normal;">1</div>
<div class="t" style="left:1113px;top:710.84px;font-size:12px;color:#3b3a39;font-weight:normal;">Update available (click to download)</div>
</body></html>
